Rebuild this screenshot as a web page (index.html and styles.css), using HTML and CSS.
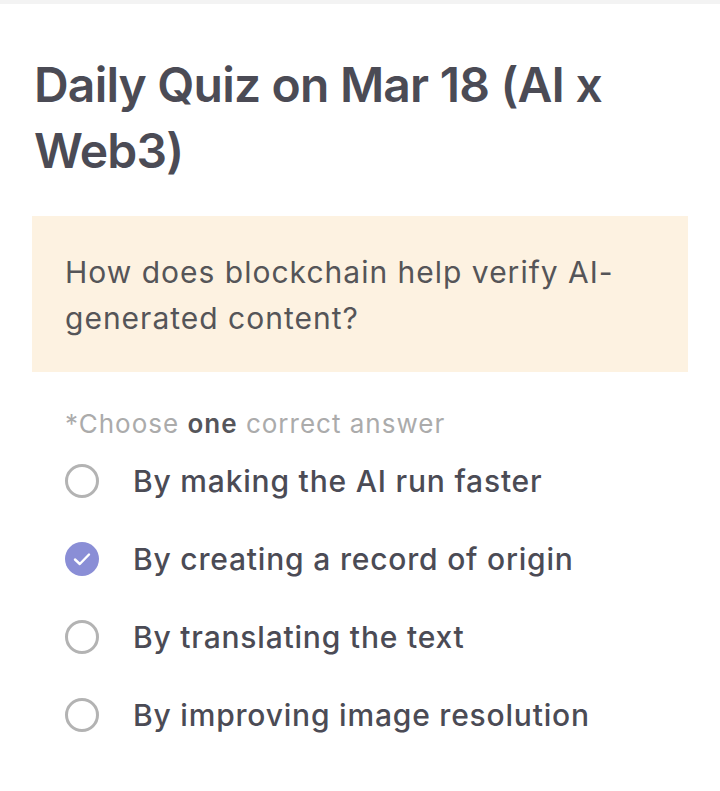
FILE: index.html
```html
<!DOCTYPE html>
<html lang="en">
<head>
<meta charset="utf-8">
<title>Daily Quiz</title>
<link rel="stylesheet" href="styles.css">
</head>
<body>
<div class="topbar"></div>
<main class="page">
  <h1 class="title">Daily Quiz on Mar 18 (AI x Web3)</h1>
  <div class="question">How does blockchain help verify AI-generated content?</div>
  <div class="answers">
    <p class="hint">*Choose <b>one</b> correct answer</p>
    <ul class="options">
      <li class="option"><span class="radio"></span><span class="label">By making the AI run faster</span></li>
      <li class="option"><span class="radio checked"><svg viewBox="0 0 34 34" width="34" height="34"><path d="M10 17.5 L14.8 22 L24 12.5" fill="none" stroke="#fff" stroke-width="2.4" stroke-linecap="round" stroke-linejoin="round"/></svg></span><span class="label">By creating a record of origin</span></li>
      <li class="option"><span class="radio"></span><span class="label">By translating the text</span></li>
      <li class="option"><span class="radio"></span><span class="label">By improving image resolution</span></li>
    </ul>
  </div>
</main>
</body>
</html>
```
FILE: styles.css
```css
* { box-sizing: border-box; }
html, body { margin: 0; padding: 0; background: #fff; }
body { font-family: Inter, "Noto Sans", sans-serif; color: #4b4b55; }
.topbar { height: 4px; background: #f3f3f3; }
.page { padding: 48px 32px 0 32px; }
.title {
  margin: 0;
  font-size: 48px;
  line-height: 66px;
  font-weight: 600;
  letter-spacing: -0.8px;
  color: #4b4b55;
  padding-left: 2px;
}
.question {
  margin-top: 32px;
  background: #fdf2e1;
  padding: 33px 32px 31px 33px;
  font-size: 30px;
  line-height: 46px;
  font-weight: 400;
  letter-spacing: 1px;
  color: #555558;
}
.answers { padding-left: 33px; margin-top: 34px; }
.hint {
  margin: 0;
  font-size: 26px;
  line-height: 36px;
  letter-spacing: 1px;
  color: #ababab;
}
.hint b { color: #55555a; font-weight: 600; }
.options { list-style: none; margin: 0; padding: 0; }
.option {
  display: flex;
  align-items: center;
  height: 78px;
}
.radio {
  width: 34px;
  height: 34px;
  border-radius: 50%;
  border: 3px solid #b3b3b3;
  flex: none;
  display: flex;
}
.radio.checked { border: none; background: #8a8ed6; }
.label {
  margin-left: 34px;
  font-size: 30px;
  font-weight: 500;
  letter-spacing: 0.8px;
  color: #4b4b55;
}
```
